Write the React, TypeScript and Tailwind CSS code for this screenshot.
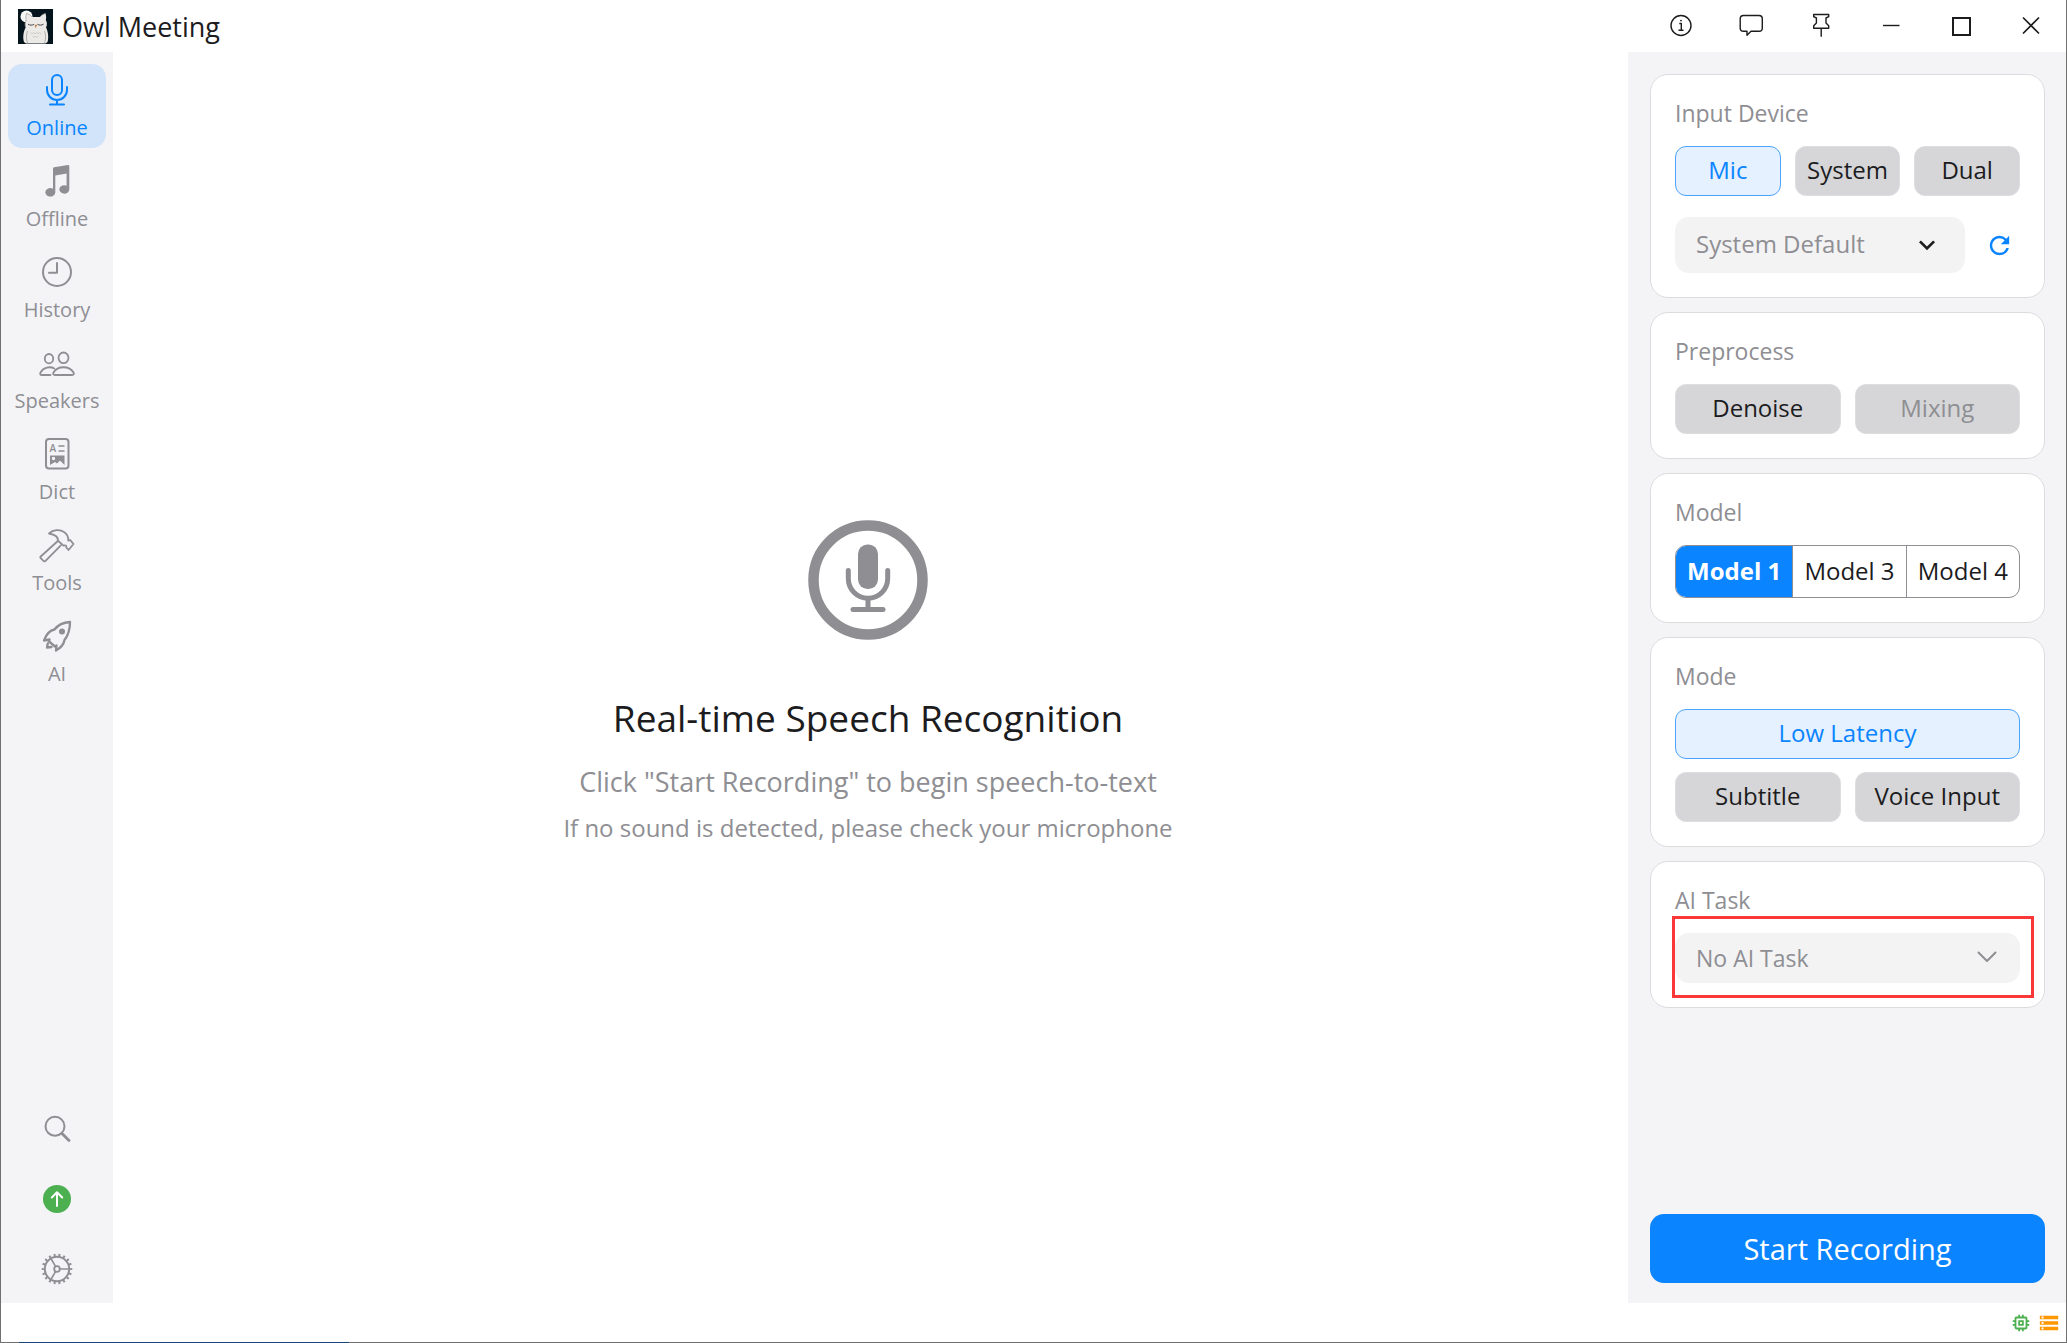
import React, { useState } from 'react';
import { MdExpandMore, MdMemory, MdRefresh, MdStorage } from 'react-icons/md';

type IconProps = { className?: string; children: React.ReactNode };

function NavIcon({ className = '', children }: IconProps) {
  return (
    <svg
      viewBox="0 0 36 36"
      className={`size-9 ${className}`}
      fill="none"
      stroke="currentColor"
      strokeWidth="2"
      strokeLinecap="round"
      strokeLinejoin="round"
      aria-hidden
    >
      {children}
    </svg>
  );
}

function WindowIcon({ children }: IconProps) {
  return (
    <svg viewBox="0 0 32 32" className="size-8" fill="none" stroke="currentColor" strokeWidth="1.4" strokeLinejoin="round" aria-hidden>
      {children}
    </svg>
  );
}

function OwlLogo() {
  return (
    <svg viewBox="0 0 35 35" className="size-[35px]" aria-hidden>
      <rect width="35" height="35" fill="#04141c" />
      <circle cx="8.500" cy="7.500" r="6" fill="#f6f8f6" />
      <path d="M8.500 4.500c2 .5 4 1.500 5.500 3.500h8c1.500-2 3.500-3 5.500-3.500.8 2.500.8 4.500.3 6.500 1.500 2.500 1.500 5 .2 7.500 2.200 4 2.900 10.500 1.500 14.500l-2 1.500H8l-2-1.500c-1.500-5-.5-10.500 1.700-14.500-.8-2.500-.7-5 .5-7.500-.5-2-.5-4 .3-6.500z" fill="#eceae6" />
      <path d="M8.500 4.500c-.8 2.500-.8 4.500-.3 6.500-1.200 2.500-1.300 5-.5 7.500M8.500 4.500c2 .5 4 1.500 5.500 3.500M27.500 4.500c-2 .5-4 1.500-5.500 3.500M9.500 22c-1.500 4-1.500 8 0 12M26.500 22c1.500 4 1.500 8 0 12" stroke="#a3a19e" strokeWidth=".8" fill="none" />
      <path d="M10 15.200c2 1.200 4 1.200 6 .2M19.500 15.400c2 1 4 1 6-.2" stroke="#4b4b4b" strokeWidth="1" fill="none" />
      <path d="M16.700 15.800h2.200l-1.100 3.500z" fill="#b5703c" />
      <path d="M12.500 23.500l1.500 1.500 1.500-1.500 1.500 1.500 1.500-1.500 1.500 1.500 1.500-1.500 1.500 1.500M14.500 27l1.500 1.500 1.500-1.500 1.500 1.500 1.500-1.500" stroke="#c3c1bd" strokeWidth=".8" fill="none" />
    </svg>
  );
}

const navItems = [
  {
    label: 'Online',
    icon: (
      <NavIcon>
        <rect x="13" y="3" width="10" height="20" rx="5" />
        <path d="M8 15v3a10 10 0 0 0 20 0v-3M18 28v4M11 32.500h14" />
      </NavIcon>
    ),
  },
  {
    label: 'Offline',
    icon: (
      <NavIcon>
        <path
          d="M14 5.500Q14 4.500 15 4.300L29 2.100Q30.300 2 30.300 3.200V26.500A5 4.200 0 1 1 27.600 22.700V10.500L16.300 12.500V29.500A5 4.200 0 1 1 14 25.800Z"
          fill="currentColor"
          stroke="none"
        />
      </NavIcon>
    ),
  },
  {
    label: 'History',
    icon: (
      <NavIcon>
        <circle cx="18" cy="18" r="14" />
        <path d="M18 9v9.700h-8" />
      </NavIcon>
    ),
  },
  {
    label: 'Speakers',
    icon: (
      <NavIcon className="[stroke-width:1.8]">
        <ellipse cx="10" cy="13.700" rx="4.200" ry="4.700" />
        <ellipse cx="24.500" cy="12.800" rx="5" ry="5.300" />
        <path d="M11.500 30H2.500C.8 30 1 28.500 1.700 27.300 4.500 22.500 11 21 15.300 23.500" />
        <path d="M16 30C14 30 13.800 28.800 14.500 27.500 18.500 20.500 30.500 20.500 34.500 27.500 35.200 28.800 35 30 33 30Z" />
      </NavIcon>
    ),
  },
  {
    label: 'Dict',
    icon: (
      <NavIcon>
        <rect x="7" y="3" width="22.500" height="29.500" rx="3" />
        <text x="10.500" y="16" fontSize="10" fontWeight="600" fill="currentColor" stroke="none">A</text>
        <path d="M20 10h5M20 15h5" strokeWidth="1.500" />
        <path
          d="M11 19.500h14.500v9.500l-4.500-4.500-3 3-2-1.500-5 3zM14.500 20.800a1.700 1.700 0 1 0 0 3.400 1.700 1.700 0 0 0 0-3.400z"
          fill="currentColor"
          fillRule="evenodd"
          stroke="none"
        />
      </NavIcon>
    ),
  },
  {
    label: 'Tools',
    icon: (
      <NavIcon className="[stroke-width:1.8]">
        <path d="M10 6.500C14 2.500 21 2.200 25 5c3 2 4.500 4.500 4.300 8.500l2-.3 3.200 3.800-5 6-2.200-2.500c.3-2-.8-2.500-2.800-1.800l-5.700-5.200c.5-3.500-3-6-8.800-7z" />
        <path d="M18.300 14.500 1.700 29.500c-.6.600-.6 1 0 1.600l3 3c.6.500 1 .5 1.600 0L21.800 18.300" />
      </NavIcon>
    ),
  },
  {
    label: 'AI',
    icon: (
      <NavIcon className="[stroke-width:2.3]">
        <path d="M31 4C24 4.500 19 7 15.500 11.500 10.500 12.500 7 17 5 22.500L10.500 21.500 10 23.500 16 28.500 17.500 27.500 17 32.500C21.500 30 24.500 27.500 25.500 22 29.500 17 31 11 31 4Z" />
        <circle cx="23" cy="13.500" r="3" fill="currentColor" stroke="none" />
        <path d="M8.800 25.500 8 29.500l4.500-.5" />
      </NavIcon>
    ),
  },
];

const windowButtons = [
  {
    label: 'About',
    icon: (
      <WindowIcon>
        <circle cx="16" cy="15.500" r="10" />
        <path d="M14.300 13.500h2v6.500M13.500 20.300h5" />
        <circle cx="16" cy="10.600" r=".9" fill="currentColor" stroke="none" />
      </WindowIcon>
    ),
  },
  {
    label: 'Feedback',
    icon: (
      <WindowIcon>
        <path d="M8.500 5.500h15.500a3.300 3.300 0 0 1 3.300 3.300v9.200a3.300 3.300 0 0 1-3.300 3.300h-8l-4 4v-4h-3.500a3.300 3.300 0 0 1-3.300-3.300V8.800a3.300 3.300 0 0 1 3.300-3.300z" />
      </WindowIcon>
    ),
  },
  {
    label: 'Pin',
    icon: (
      <WindowIcon>
        <path d="M8.700 4.500h15v2.200l-2.700 1.300v5l2.700 2.700v2.600h-15v-2.600l2.700-2.700V8L8.700 6.700zM16.200 18.500v8.200" />
      </WindowIcon>
    ),
  },
  { label: 'Minimize', icon: <WindowIcon><path d="M8 15.500h16.500" /></WindowIcon> },
  { label: 'Maximize', icon: <WindowIcon><rect x="8" y="8" width="17" height="17" strokeWidth="2" strokeLinejoin="miter" /></WindowIcon> },
  { label: 'Close', icon: <WindowIcon><path d="M8 7.500l16 16M24 7.500l-16 16" strokeWidth="1.700" /></WindowIcon> },
];

function TitleBar() {
  return (
    <header className="flex h-[52px] shrink-0 items-center pl-[17px] pr-[19px]">
      <OwlLogo />
      <h1 className="ml-[9px] pt-[2px] text-[27px] leading-8">Owl Meeting</h1>
      <div className="ml-auto flex gap-[38px]">
        {windowButtons.map((b) => (
          <button key={b.label} aria-label={b.label}>{b.icon}</button>
        ))}
      </div>
    </header>
  );
}

function Sidebar() {
  const [active, setActive] = useState('Online');
  return (
    <nav className="flex w-28 shrink-0 flex-col items-center gap-[7px] bg-[#f4f4f7] pb-4 pt-3 text-[#8e8e93]">
      {navItems.map((item) => (
        <button
          key={item.label}
          onClick={() => setActive(item.label)}
          className={`flex w-[98px] flex-col items-center gap-2 rounded-[14px] py-2 text-[20px] leading-6 ${
            active === item.label ? 'bg-[#d1e4f9] text-[#0a84ff]' : ''
          }`}
        >
          {item.icon}
          {item.label}
        </button>
      ))}
      <div className="mt-auto flex flex-col gap-[34px]">
        <button aria-label="Search">
          <NavIcon>
            <circle cx="16" cy="15.300" r="9.500" />
            <path d="M23 22.500l7 7" strokeWidth="2.800" />
          </NavIcon>
        </button>
        <button aria-label="Update available">
          <NavIcon>
            <circle cx="18" cy="18" r="14" fill="#4caf50" stroke="none" />
            <path d="M18 25V11.500M12.800 16.500l5.200-5.200 5.200 5.200" stroke="white" />
          </NavIcon>
        </button>
        <button aria-label="Settings">
          <NavIcon>
            <circle cx="18" cy="18" r="12.200" />
            <circle cx="18" cy="18" r="14" strokeWidth="2.600" strokeLinecap="butt" pathLength="36" strokeDasharray="0.800 1.200" strokeDashoffset="0.400" />
            <circle cx="18" cy="18" r="2.800" strokeWidth="1.800" />
            <path d="M21 18h9M16.500 15.400l-4.600-7.900M16.500 20.600l-4.600 7.900" strokeWidth="1.600" />
          </NavIcon>
        </button>
      </div>
    </nav>
  );
}

function EmptyState() {
  return (
    <main className="flex min-w-0 flex-1 flex-col items-center justify-center pr-[5px] pt-2 text-[#8e8e93]">
      <svg viewBox="0 0 120 120" className="size-[120px]" fill="none" stroke="currentColor" strokeLinecap="round" aria-hidden>
        <circle cx="60" cy="60" r="54.500" strokeWidth="10.500" />
        <rect x="50" y="24.500" width="20" height="44.500" rx="9.500" fill="currentColor" stroke="none" />
        <path d="M40.300 50.500v8a19.700 19.700 0 0 0 39.400 0v-8" strokeWidth="5" />
        <path d="M60 79v9" strokeWidth="5" strokeLinecap="butt" />
        <path d="M45 89.500h30" strokeWidth="5" />
      </svg>
      <h2 className="mt-[52px] text-[37px] leading-[52px] text-[#1c1c1e]">Real-time Speech Recognition</h2>
      <p className="mt-5 text-[27px] leading-9">Click "Start Recording" to begin speech-to-text</p>
      <p className="mt-3 text-[24px] leading-8">If no sound is detected, please check your microphone</p>
    </main>
  );
}

function Card({ title, children }: { title: string; children: React.ReactNode }) {
  return (
    <section className="rounded-[18px] border border-[#dcdcde] bg-white p-6">
      <h3 className="mb-[19px] text-[23px] leading-[28px] text-[#8e8e93]">{title}</h3>
      {children}
    </section>
  );
}

function Choice({ label, active, disabled, className = '', onClick }: {
  label: string;
  active?: boolean;
  disabled?: boolean;
  className?: string;
  onClick?: () => void;
}) {
  const look = active
    ? 'border-[#4ba3fb] bg-[#e5f1ff] text-[#0a84ff]'
    : disabled
      ? 'border-[#dedee0] bg-[#d6d6d8] text-[#8e8e93]'
      : 'border-[#dedee0] bg-[#d6d6d8] text-[#1c1c1e]';
  return (
    <button
      disabled={disabled}
      aria-pressed={!!active}
      onClick={onClick}
      className={`h-[50px] whitespace-nowrap rounded-[11px] border pb-[2px] text-[24px] leading-8 ${look} ${className}`}
    >
      {label}
    </button>
  );
}

function SettingsPanel() {
  const [device, setDevice] = useState('Mic');
  const [denoise, setDenoise] = useState(false);
  const [model, setModel] = useState('Model 1');
  const [mode, setMode] = useState('Low Latency');

  return (
    <aside className="flex w-[438px] shrink-0 flex-col gap-[14px] bg-[#f4f4f7] pb-5 pl-[22px] pr-[21px] pt-[22px]">
      <Card title="Input Device">
        <div className="grid grid-cols-3 gap-[14px]">
          {['Mic', 'System', 'Dual'].map((d) => (
            <Choice key={d} label={d} active={device === d} onClick={() => setDevice(d)} />
          ))}
        </div>
        <div className="mt-[21px] flex items-center">
          <div className="relative flex-1">
            <select aria-label="Input device" className="h-14 w-full appearance-none rounded-[14px] bg-[#f3f3f3] pb-[2px] pl-[21px] text-[24px] text-[#8e8e93]">
              <option>System Default</option>
            </select>
            <MdExpandMore className="pointer-events-none absolute right-[22px] top-3 size-8 text-[#1c1c1e]" />
          </div>
          <button aria-label="Refresh devices" className="ml-5 mr-[6px] text-[#0a84ff]">
            <MdRefresh className="size-[29px]" />
          </button>
        </div>
      </Card>

      <Card title="Preprocess">
        <div className="grid grid-cols-2 gap-[14px]">
          <Choice label="Denoise" active={denoise} onClick={() => setDenoise(!denoise)} />
          <Choice label="Mixing" disabled />
        </div>
      </Card>

      <Card title="Model">
        <div className="flex h-[53px] divide-x divide-[#8e8e93] overflow-hidden rounded-[11px] border border-[#8e8e93]">
          {['Model 1', 'Model 3', 'Model 4'].map((m) => (
            <button
              key={m}
              aria-pressed={model === m}
              onClick={() => setModel(m)}
              className={`flex-auto whitespace-nowrap pb-[2px] text-[24px] leading-8 ${model === m ? 'bg-[#0a84ff] font-bold text-white' : ''}`}
            >
              {m}
            </button>
          ))}
        </div>
      </Card>

      <Card title="Mode">
        <div className="grid grid-cols-2 gap-x-[14px] gap-y-[13px]">
          {['Low Latency', 'Subtitle', 'Voice Input'].map((m) => (
            <Choice
              key={m}
              label={m}
              active={mode === m}
              onClick={() => setMode(m)}
              className={m === 'Low Latency' ? 'col-span-2' : ''}
            />
          ))}
        </div>
      </Card>

      <Card title="AI Task">
        <div className="relative">
          <select aria-label="AI task" className="block h-[50px] w-full appearance-none rounded-[14px] bg-[#f3f3f3] pl-[21px] text-[23px] text-[#8e8e93]">
            <option>No AI Task</option>
          </select>
          <svg viewBox="0 0 20 12" className="pointer-events-none absolute right-[23px] top-[18px] h-3 w-5" fill="none" stroke="#8e8e93" strokeWidth="2" strokeLinecap="round" strokeLinejoin="round" aria-hidden>
            <path d="M1.500 1.500l8.500 8.500 8.500-8.500" />
          </svg>
          {/* highlight frame */}
          <div className="pointer-events-none absolute -bottom-[15px] -left-[3px] -right-[14px] -top-[17px] border-[3px] border-[#fb3838]" />
        </div>
      </Card>

      <button className="mt-auto h-[69px] rounded-[14px] bg-[#0a84ff] text-[29px] leading-10 text-white">Start Recording</button>
    </aside>
  );
}

export default function App() {
  return (
    <div className="flex h-screen flex-col border-x border-[#707070] bg-white font-['Open_Sans',sans-serif] text-[#1c1c1e]">
      <TitleBar />
      <div className="flex min-h-0 flex-1">
        <Sidebar />
        <EmptyState />
        <SettingsPanel />
      </div>
      <footer className="flex h-10 shrink-0 flex-col">
        <div className="flex flex-1 items-center justify-end gap-[6px] pr-[6px]">
          <MdMemory className="size-[22px] text-[#4caf50]" />
          <MdStorage className="size-[22px] text-[#ff9800]" />
        </div>
        <div className="h-px bg-[#707070] pl-[18px]">
          <div className="h-px w-[330px] bg-[#14467a]" />
        </div>
      </footer>
    </div>
  );
}
